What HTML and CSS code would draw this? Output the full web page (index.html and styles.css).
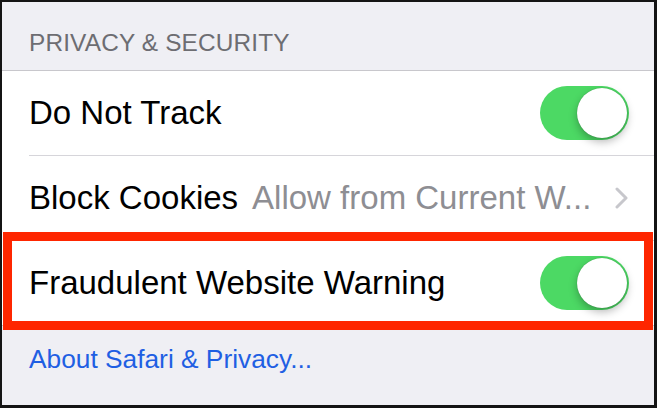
FILE: index.html
```html
<!doctype html>
<html lang="en">
<head>
    <meta charset="UTF-8">
    <meta name="viewport" content="width=device-width, initial-scale=1.0">
    <title>Privacy &amp; Security</title>
    <link rel="stylesheet" href="styles.css">
</head>
<body>
    <div class="screen">
        <div class="section-header">PRIVACY &amp; SECURITY</div>

        <div class="group">
            <div class="row">
                <span class="label">Do Not Track</span>
                <span class="switch on"><span class="knob"></span></span>
            </div>
            <div class="row">
                <span class="label">Block Cookies</span>
                <span class="value">Allow from Current W...</span>
                <svg class="chevron" width="14" height="22" viewBox="0 0 14 22">
                    <path d="M2 2 L11 11 L2 20" fill="none" stroke="#c7c7cc" stroke-width="3" stroke-linecap="round" stroke-linejoin="round"/>
                </svg>
            </div>
            <div class="row last">
                <span class="label">Fraudulent Website Warning</span>
                <span class="switch on"><span class="knob"></span></span>
                <div class="highlight-box"></div>
            </div>
        </div>

        <div class="section-footer">
            <a href="#" class="link">About Safari &amp; Privacy...</a>
        </div>
    </div>
</body>
</html>
```

FILE: styles.css
```css
html, body {
    margin: 0;
    padding: 0;
    height: 100%;
}

body {
    background: #141414;
    font-family: "Liberation Sans", Arial, sans-serif;
    overflow: hidden;
}

.screen {
    margin: 2px 3px 0 2px;
    height: 403px;
    background: #efeff4;
    overflow: hidden;
}

.section-header {
    padding: 27px 0 13px 27px;
    font-size: 24.4px;
    letter-spacing: 0.15px;
    color: #6d6d72;
    border-bottom: 1px solid #c8c7cc;
}

.group {
    background: white;
    border-bottom: 1px solid #c8c7cc;
}

.row {
    position: relative;
    display: flex;
    align-items: center;
    height: 84px;
    margin-left: 27px;
    padding-right: 25px;
    border-bottom: 1px solid #d6d5da;
}

.row.last {
    border-bottom: none;
}

.label {
    font-size: 33px;
    color: #000;
    white-space: nowrap;
}

.value {
    margin-left: 14px;
    font-size: 33px;
    color: #8e8e93;
    white-space: nowrap;
    flex: 1;
}

.chevron {
    margin-left: 22px;
}

/* iOS style switch */
.switch {
    margin-left: auto;
    position: relative;
    width: 89px;
    height: 54px;
    border-radius: 27px;
    background: #4cd964;
}

.switch .knob {
    position: absolute;
    top: 2px;
    right: 2px;
    width: 50px;
    height: 50px;
    border-radius: 50%;
    background: white;
    box-shadow: 0 4px 8px rgba(0, 0, 0, 0.28), 0 0 1px rgba(0, 0, 0, 0.3);
}

/* red annotation around the last row */
.highlight-box {
    position: absolute;
    top: -9px;
    bottom: -5px;
    left: -26px;
    right: 1px;
    border: 9px solid #fe2600;
    pointer-events: none;
}

.section-footer {
    padding: 18px 0 0 27px;
}

.link {
    font-size: 26.3px;
    color: #1f5fe3;
    text-decoration: none;
}
```
